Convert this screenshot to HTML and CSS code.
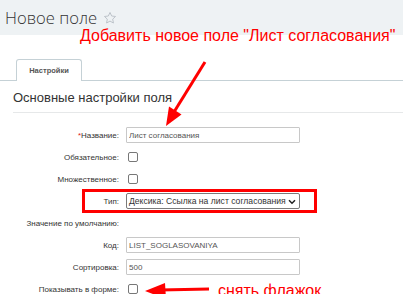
FILE: index.html
```html
<!DOCTYPE html>
<html lang="ru">
<head>
<meta charset="utf-8">
<title>Новое поле</title>
<link rel="stylesheet" href="styles.css">
</head>
<body>
<div class="page">
  <header class="header">
    <h1 class="title">Новое поле</h1>
    <svg class="star" width="14" height="14" viewBox="0 0 24 24"><path d="M12 2.5l2.9 6.1 6.6.8-4.9 4.6 1.3 6.6L12 17.3l-5.9 3.3 1.3-6.6-4.9-4.6 6.6-.8z" fill="none" stroke="#b9c0c6" stroke-width="1.6" stroke-linejoin="round"/></svg>
  </header>

  <nav class="tabs">
    <div class="tab">Настройки</div>
  </nav>

  <section class="section">
    <h2 class="section-title">Основные настройки поля</h2>
    <div class="form">
      <div class="row"><label class="label"><span class="req">*</span>Название:</label><div class="field"><input class="input" value="Лист согласования"></div></div>
      <div class="row"><label class="label">Обязательное:</label><div class="field"><span class="check"></span></div></div>
      <div class="row"><label class="label">Множественное:</label><div class="field"><span class="check"></span></div></div>
      <div class="row"><label class="label">Тип:</label><div class="field"><div class="select">Дексика: Ссылка на лист согласования<svg class="chev" width="8" height="6" viewBox="0 0 8 6"><path d="M1 1.2l3 3 3-3" fill="none" stroke="#222" stroke-width="1.5"/></svg></div></div></div>
      <div class="row"><label class="label">Значение по умолчанию:</label><div class="field"></div></div>
      <div class="row"><label class="label">Код:</label><div class="field"><input class="input" value="LIST_SOGLASOVANIYA"></div></div>
      <div class="row"><label class="label">Сортировка:</label><div class="field"><input class="input" value="500"></div></div>
      <div class="row"><label class="label">Показывать в форме:</label><div class="field"><span class="check"></span></div></div>
    </div>
  </section>

  <svg class="marks" width="403" height="294" viewBox="0 0 403 294">
    <rect x="83.5" y="190.5" width="232" height="21" fill="none" stroke="#ff0000" stroke-width="3"/>
    <line x1="205" y1="62" x2="174" y2="112" stroke="#ff0000" stroke-width="3"/>
    <polygon points="166,126 181.5,114.5 169,106.5" fill="#ff0000"/>
    <line x1="160" y1="290" x2="209" y2="289" stroke="#ff0000" stroke-width="3"/>
    <polygon points="145,291 165,283 166,299" fill="#ff0000"/>
  </svg>
  <div class="note note-top">Добавить новое поле "Лист согласования"</div>
  <div class="note note-bottom">снять флажок</div>
</div>
</body>
</html>
```

FILE: styles.css
```css
* { box-sizing: border-box; }
html, body { margin: 0; padding: 0; background: #fff; }
body { font-family: "Liberation Sans", Arial, sans-serif; color: #333; }
.page { position: relative; width: 403px; height: 294px; overflow: hidden; }

.header {
  height: 35px;
  background: #eef2f4;
  display: flex;
  align-items: center;
  padding-left: 5px;
}
.title {
  margin: 0;
  font-family: "Open Sans", "Liberation Sans", sans-serif;
  font-size: 16.6px;
  font-weight: 300;
  color: #333;
}
.star { margin-left: 6px; margin-top: 1px; }

.tabs {
  margin-top: 24px;
  display: flex;
  padding-left: 16px;
  border-bottom: 1px solid #c5d1d6;
}
.tab {
  width: 66px;
  height: 22px;
  margin-bottom: -1px;
  background: #fff;
  border: 1px solid #c5d1d6;
  border-bottom: none;
  border-radius: 3px 3px 0 0;
  font-size: 7.5px;
  font-weight: bold;
  color: #555;
  display: flex;
  align-items: center;
  justify-content: center;
}

.section { padding-left: 13px; }
.section-title {
  margin: 0;
  padding: 9px 0 6px;
  font-size: 13px;
  line-height: 16px;
  font-weight: normal;
  color: #333;
  border-bottom: 1px solid #e6e8e9;
}

.form { margin-top: 11px; display: flex; flex-direction: column; }
.row {
  height: 22px;
  display: grid;
  grid-template-columns: 106px 174px;
  column-gap: 7px;
  align-items: center;
}
.label {
  text-align: right;
  font-size: 8px;
  color: #333;
  white-space: nowrap;
}
.req { color: #e02020; }
.field { display: flex; align-items: center; }
.input {
  width: 174px;
  height: 16px;
  border: 1px solid #c8c8c8;
  border-radius: 1px;
  padding: 0 2px;
  font-family: "Liberation Sans", Arial, sans-serif;
  font-size: 8px;
  color: #555;
  background: #fff;
  outline: none;
}
.check {
  width: 10px;
  height: 10px;
  margin-left: 2px;
  border: 1px solid #777;
  border-radius: 2px;
  background: #fff;
}
.select {
  position: relative;
  width: 174px;
  height: 16px;
  border: 1px solid #7a7a7a;
  border-radius: 2px;
  padding: 0 2px;
  font-size: 8.6px;
  color: #333;
  display: flex;
  align-items: center;
  white-space: nowrap;
}
.chev { position: absolute; right: 3px; top: 5px; }

.marks { position: absolute; left: 0; top: 0; pointer-events: none; }
.note {
  position: absolute;
  color: #ff0000;
  font-size: 16px;
  line-height: 18px;
  white-space: nowrap;
}
.note-top { left: 80px; top: 27px; }
.note-bottom { left: 218px; top: 282px; }
```
